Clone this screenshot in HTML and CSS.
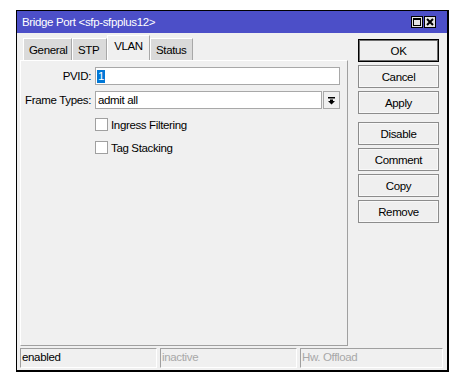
FILE: index.html
```html
<!DOCTYPE html>
<html lang="en">
<head>
  <meta charset="UTF-8" />
  <title>Bridge Port &lt;sfp-sfpplus12&gt;</title>
  <link rel="stylesheet" href="styles.css">
</head>
<body>
  <div class="window">
    <div class="titlebar">
      <span class="title">Bridge Port &lt;sfp-sfpplus12&gt;</span>
      <div class="title-btns">
        <span class="tbtn">
          <svg width="10" height="10" viewBox="0 0 10 10">
            <rect x="1.5" y="1.5" width="7" height="7" fill="none" stroke="#000" stroke-width="1"/>
            <line x1="1" y1="2" x2="9" y2="2" stroke="#000" stroke-width="2"/>
          </svg>
        </span>
        <span class="tbtn">
          <svg width="10" height="10" viewBox="0 0 10 10">
            <path d="M2 2 L8 8 M8 2 L2 8" stroke="#000" stroke-width="2"/>
          </svg>
        </span>
      </div>
    </div>

    <div class="main">
      <div class="left">
        <div class="tabs">
          <div class="tab">General</div>
          <div class="tab">STP</div>
          <div class="tab active">VLAN</div>
          <div class="tab">Status</div>
        </div>
        <div class="panel">
          <div class="row">
            <label class="lbl">PVID:</label>
            <div class="input"><span class="sel">1</span></div>
          </div>
          <div class="row">
            <label class="lbl">Frame Types:</label>
            <div class="input select">admit all</div>
            <div class="drop">
              <svg width="9" height="9" viewBox="0 0 9 9">
                <rect x="1" y="1" width="7" height="1.5" fill="#000"/>
                <path d="M3 3.5 H6 V5 H8 L4.5 8.5 L1 5 H3 Z" fill="#000"/>
              </svg>
            </div>
          </div>
          <div class="check-row first">
            <span class="box"></span>
            <span>Ingress Filtering</span>
          </div>
          <div class="check-row">
            <span class="box"></span>
            <span>Tag Stacking</span>
          </div>
        </div>
      </div>

      <div class="buttons">
        <button class="btn default">OK</button>
        <button class="btn">Cancel</button>
        <button class="btn">Apply</button>
        <button class="btn spaced">Disable</button>
        <button class="btn">Comment</button>
        <button class="btn">Copy</button>
        <button class="btn">Remove</button>
      </div>
    </div>

    <div class="statusbar">
      <div class="cell">enabled</div>
      <div class="cell dim">inactive</div>
      <div class="cell dim wide">Hw. Offload</div>
    </div>
  </div>
</body>
</html>
```

FILE: styles.css
```css
* {
  margin: 0;
  padding: 0;
  box-sizing: border-box;
}

body {
  font-family: 'Liberation Sans', Arial, sans-serif;
  font-size: 11.5px;
  letter-spacing: -0.35px;
  color: #000;
  background: #fff;
  padding: 10px 0 0 16px;
}

.window {
  width: 433px;
  height: 362px;
  background: #f0f0f0;
  border: 1px solid #000;
  border-right-width: 2px;
  border-bottom-width: 2px;
  display: flex;
  flex-direction: column;
}

.titlebar {
  height: 22px;
  background: #4c4fc8;
  color: #fff;
  display: flex;
  align-items: center;
  justify-content: space-between;
  padding: 0 11px 0 5px;
}

.title-btns {
  display: flex;
  gap: 1px;
}

.tbtn {
  width: 12px;
  height: 12px;
  border: 1px solid #000;
  background: #e4e4e4;
  display: flex;
  align-items: center;
  justify-content: center;
}

.main {
  flex: 1;
  display: flex;
  padding: 2px 7px 0 3px;
  gap: 10px;
}

.left {
  width: 328px;
  display: flex;
  flex-direction: column;
}

.tabs {
  display: flex;
  align-items: flex-end;
  height: 25px;
  padding-left: 3px;
}

.tab {
  height: 22px;
  padding: 0 5px;
  display: flex;
  align-items: center;
  background: #dadada;
  border-left: 1px solid #fff;
  border-top: 1px solid #fff;
  border-right: 1px solid #a8a8a8;
}

.tab:nth-child(1) { width: 49px; }
.tab:nth-child(2) { width: 35px; }
.tab:nth-child(4) { width: 43px; }

.tab.active {
  width: 43px;
  height: 25px;
  background: #f0f0f0;
  padding-bottom: 4px;
  justify-content: center;
}

.panel {
  flex: 1;
  border-top: 1px solid #fff;
  border-left: 1px solid #fff;
  border-right: 1px solid #a0a0a0;
  border-bottom: 1px solid #a0a0a0;
  padding: 6px 7px 0 0;
}

.row {
  display: flex;
  align-items: center;
  gap: 4px;
  margin-bottom: 6px;
}

.lbl {
  width: 70px;
  flex-shrink: 0;
  white-space: nowrap;
  text-align: right;
}

.input {
  flex: 1;
  height: 18px;
  background: #fff;
  border: 1px solid #a8a8a8;
  padding-left: 1px;
  display: flex;
  align-items: center;
}

.select {
  padding-left: 2px;
}

.sel {
  background: #0078d7;
  color: #fff;
  padding: 0 1px;
  line-height: 13px;
}

.drop {
  width: 17px;
  height: 18px;
  margin-left: -3px;
  border: 1px solid #a8a8a8;
  background: #f0f0f0;
  display: flex;
  align-items: center;
  justify-content: center;
}

.check-row {
  display: flex;
  align-items: center;
  gap: 3px;
  height: 23px;
  padding-left: 74px;
}

.check-row.first {
  margin-top: -2px;
}

.box {
  width: 13px;
  height: 13px;
  border: 1px solid #a0a0a0;
  background: #fff;
}

.buttons {
  width: 81px;
  display: flex;
  flex-direction: column;
  gap: 3px;
  padding-top: 4px;
}

.btn {
  height: 23px;
  font-family: 'Liberation Sans', Arial, sans-serif;
  font-size: 11.5px;
  letter-spacing: -0.35px;
  background: #efefef;
  border: 1px solid #8c8c8c;
  box-shadow: inset 0 0 0 1px #f8f8f8;
  color: #000;
}

.btn.default {
  border: 1px solid #000;
  box-shadow: inset 0 0 0 1px #6e6e6e;
}

.btn.spaced {
  margin-top: 5px;
}

.statusbar {
  display: flex;
  gap: 3px;
  height: 20px;
  margin: 2px 2px 2px 3px;
}

.cell {
  width: 137px;
  border-top: 1px solid #a0a0a0;
  border-left: 1px solid #a0a0a0;
  border-right: 1px solid #fff;
  border-bottom: 1px solid #fff;
  padding: 2px 1px;
}

.cell.wide {
  width: 143px;
}

.dim {
  color: #a8a8a8;
}
```
